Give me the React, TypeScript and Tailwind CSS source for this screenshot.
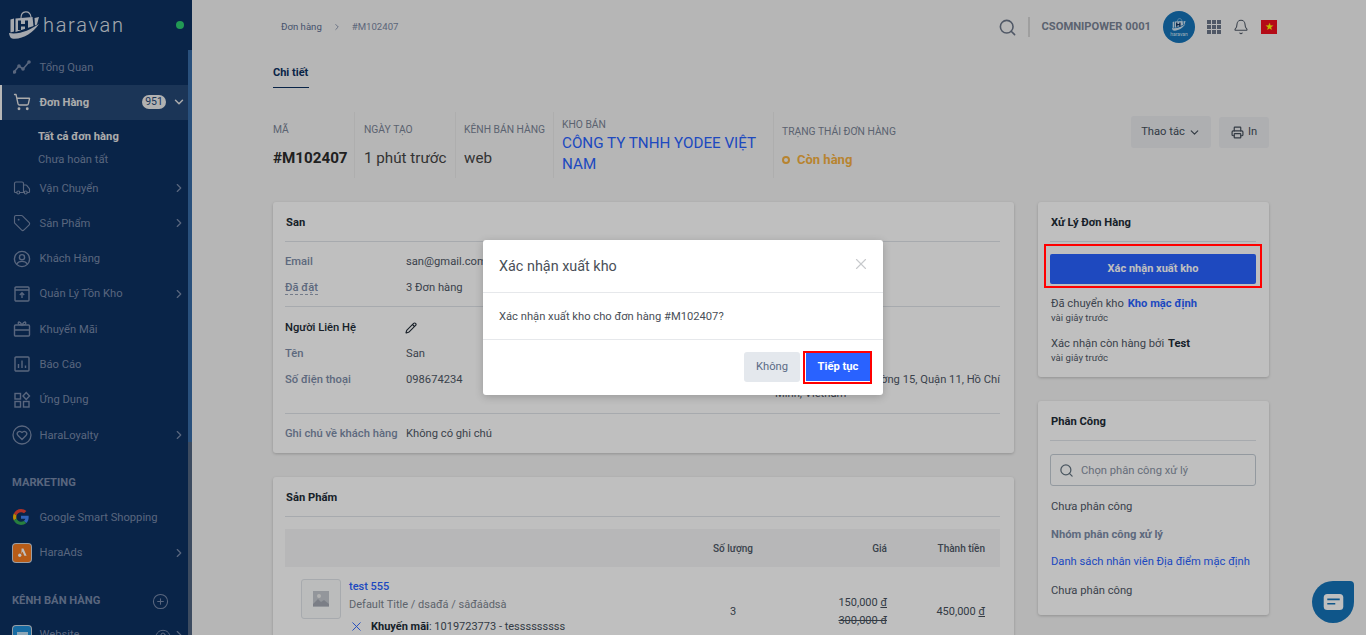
import React from 'react';
import {
  Bell,
  ChevronDown,
  ChevronRight,
  CirclePlus,
  Eye,
  Pencil,
  Printer,
  Search,
  ShoppingCart,
  Tag,
  Truck,
  X,
} from 'lucide-react';

const iconCls = 'w-[18px] h-[18px]';

const LineIcon = () => (
  <svg viewBox="0 0 18 18" className={iconCls} fill="none" stroke="currentColor" strokeWidth="1.6">
    <path d="M1 14l5-6 4 3 6-7" />
    <circle cx="1.5" cy="14" r="1" fill="currentColor" />
    <circle cx="6" cy="8" r="1" fill="currentColor" />
    <circle cx="10" cy="11" r="1" fill="currentColor" />
    <circle cx="16" cy="4" r="1" fill="currentColor" />
  </svg>
);

const UserIcon = () => (
  <svg viewBox="0 0 18 18" className={iconCls} fill="none" stroke="currentColor" strokeWidth="1.4">
    <circle cx="9" cy="9" r="7.6" />
    <circle cx="9" cy="7.2" r="2.6" />
    <path d="M3.8 14c1-2 3-2.6 5.2-2.6s4.200.6 5.200 2.600" />
  </svg>
);

const StockIcon = () => (
  <svg viewBox="0 0 18 18" className={iconCls} fill="none" stroke="currentColor" strokeWidth="1.4">
    <rect x="2" y="2" width="14" height="14" rx="1" />
    <path d="M2 5h14M9 13V8M6.800 10L9 7.800 11.200 10" />
  </svg>
);

const GiftIcon = () => (
  <svg viewBox="0 0 18 18" className={iconCls} fill="none" stroke="currentColor" strokeWidth="1.4">
    <rect x="1.500" y="5" width="15" height="11" rx="1" />
    <path d="M1.500 10h15M9 5C7 1 4.500 1.500 5.500 4 6 5 7.500 5 9 5c1.500 0 3 0 3.500-1 1-2.500-1.500-3-3.500 1z" />
  </svg>
);

const ReportIcon = () => (
  <svg viewBox="0 0 18 18" className={iconCls} fill="none" stroke="currentColor" strokeWidth="1.4">
    <rect x="2" y="2" width="14" height="14" rx="1" />
    <path d="M5.500 13V9M9 13V5.500M12.500 13v-2.500" />
  </svg>
);

const AppsIcon = () => (
  <svg viewBox="0 0 18 18" className={iconCls} fill="none" stroke="currentColor" strokeWidth="1.4">
    <rect x="2" y="2.500" width="5.500" height="5.500" />
    <rect x="2" y="10.500" width="5.500" height="5.500" />
    <rect x="10.500" y="10.500" width="5.500" height="5.500" />
    <path d="M13.200 1.500l3.300 3.500-3.300 3.500L10 5z" />
  </svg>
);

const LoyaltyIcon = () => (
  <svg viewBox="0 0 20 20" className="w-5 h-5 -ml-[1px]" fill="none" stroke="currentColor" strokeWidth="1.3">
    <circle cx="10" cy="10" r="9" />
    <path d="M10 14.500L5.800 10.200C4 8 6.800 4.800 10 7.500c3.200-2.700 6 .5 4.200 2.700z" />
  </svg>
);

const GoogleIcon = () => (
  <svg viewBox="0 0 48 48" className="w-[16px] h-[16px]">
    <path fill="#ea4335" d="M24 9.500c3.500 0 6.700 1.200 9.200 3.600l6.900-6.900C35.900 2.400 30.400 0 24 0 14.600 0 6.500 5.400 2.600 13.300l8 6.200C12.400 13.600 17.700 9.500 24 9.500z" />
    <path fill="#4285f4" d="M47 24.500c0-1.600-.1-3.100-.4-4.500H24v9h13c-.6 3-2.300 5.500-4.800 7.200l7.700 6C44.400 37.900 47 31.800 47 24.500z" />
    <path fill="#fbbc05" d="M10.500 28.500c-.5-1.400-.7-2.900-.7-4.500s.3-3.100.7-4.500l-8-6.200C.9 16.500 0 20.100 0 24s.9 7.500 2.600 10.700z" />
    <path fill="#34a853" d="M24 48c6.500 0 11.900-2.100 15.900-5.800l-7.700-6c-2.200 1.400-4.900 2.300-8.200 2.300-6.300 0-11.600-4.200-13.500-9.900l-8 6.200C6.500 42.600 14.600 48 24 48z" />
  </svg>
);

const AdsIcon = () => (
  <span className="flex h-[18px] w-[18px] items-center justify-center rounded-[3px] bg-[#f47b20] ring-1 ring-[#ccd3dd]">
    <svg viewBox="0 0 12 12" className="h-[11px] w-[11px]" fill="#fff">
      <path d="M5 1.500h2l3.500 8H8L6 5 4.800 7.500z" />
      <circle cx="3" cy="9" r="1.800" />
    </svg>
  </span>
);

const SiteIcon = () => (
  <span className="flex h-[18px] w-[18px] items-center justify-center rounded-[3px] bg-[#1f8fd8] ring-1 ring-[#ccd3dd]">
    <span className="h-[6px] w-[11px] bg-white/70" />
  </span>
);

const HaravanMark = ({ className }: { className: string }) => (
  <svg viewBox="0 0 31 28" className={className}>
    <path d="M12 7c0-8 9-8 10-1" fill="none" stroke="currentColor" strokeWidth="1.100" />
    <path d="M1.500 8.500l3.500-1v13l-3.500 1zM6.500 7.500l17-1.500 1 9-18 6z" fill="currentColor" />
    <path d="M25.500 7l4.500-1-2 7.500-2 1z" fill="currentColor" />
    <path d="M9 9.500h3v3.500h4V9.500h3V19h-3v-3.500h-4V19H9z" fill="#0d3061" />
    <path d="M0 22c10 2 21-3 30-9-6 9-17 16-27 14.500C1 27 .3 24 0 22z" fill="currentColor" />
  </svg>
);

type NavItem = {
  label: string;
  icon: React.ReactNode;
  arrow?: boolean;
};

const midItems: NavItem[] = [
  { label: 'Vận Chuyển', icon: <Truck className={iconCls} strokeWidth={1.5} />, arrow: true },
  { label: 'Sản Phẩm', icon: <Tag className={iconCls} strokeWidth={1.5} />, arrow: true },
  { label: 'Khách Hàng', icon: <UserIcon /> },
  { label: 'Quản Lý Tồn Kho', icon: <StockIcon />, arrow: true },
  { label: 'Khuyến Mãi', icon: <GiftIcon /> },
  { label: 'Báo Cáo', icon: <ReportIcon /> },
  { label: 'Ứng Dụng', icon: <AppsIcon /> },
  { label: 'HaraLoyalty', icon: <LoyaltyIcon />, arrow: true },
];

const NavRow = ({ item }: { item: NavItem }) => (
  <div className="flex h-[35.3px] items-center pl-[13px] pr-[6.5px] text-[#7789a8]">
    <span className="flex w-[26.5px] shrink-0 justify-start">{item.icon}</span>
    <span className="flex-1 pt-[2px] text-[11.2px]">{item.label}</span>
    {item.arrow && <ChevronRight className="h-[14px] w-[14px]" />}
  </div>
);

const Sidebar = () => (
  <aside className="relative h-full w-[192px] shrink-0 overflow-hidden bg-[#0d3061]">
    <div className="flex h-[49.5px] items-center pl-[9px] pr-[8px] text-[#dde1e8]">
      <HaravanMark className="h-[28px] w-[31px]" />
      <span className="ml-[3px] flex-1 text-[20px] font-light leading-none tracking-[1.7px]">haravan</span>
      <span className="h-[8px] w-[8px] rounded-full bg-[#2ecc71]" />
    </div>
    <NavRow item={{ label: 'Tổng Quan', icon: <LineIcon /> }} />
    <div className="flex h-[35px] items-center border-l-2 border-[#f5f5f5] bg-[#254775] pl-[11px] pr-[6.5px] text-[#e6e6e6]">
      <ShoppingCart className="w-[18px] h-[18px] shrink-0" strokeWidth={1.8} />
      <span className="ml-[8.500px] flex-1 pt-[2px] text-[11.2px] font-bold">Đơn Hàng</span>
      <span className="mr-[5.500px] flex h-[14px] w-[24px] items-center justify-center rounded-full bg-[#ededed] text-[10.500px] text-[#254775]">951</span>
      <ChevronDown className="h-[14px] w-[14px]" strokeWidth={2.500} />
    </div>
    <div className="h-[50.500px] pl-[38px] pt-[6px] text-[11.2px]">
      <div className="flex h-[23px] items-center font-bold text-[#e6e6e6]">Tất cả đơn hàng</div>
      <div className="flex h-[23px] items-center text-[#7789a8]">Chưa hoàn tất</div>
    </div>
    {midItems.map((item) => (
      <NavRow key={item.label} item={item} />
    ))}
    <div className="pl-[12px] pt-[21px] pb-[8px] text-[11.2px] font-bold leading-[18px] text-[#7789a8]">MARKETING</div>
    <NavRow item={{ label: 'Google Smart Shopping', icon: <GoogleIcon /> }} />
    <NavRow item={{ label: 'HaraAds', icon: <AdsIcon />, arrow: true }} />
    <div className="flex items-center pl-[12px] pr-[23px] pt-[22px] pb-[7px] text-[#7789a8]">
      <span className="flex-1 text-[11.2px] font-bold leading-[18px]">KÊNH BÁN HÀNG</span>
      <CirclePlus className="h-[17px] w-[17px]" strokeWidth={1.5} />
    </div>
    <div className="flex h-[35.3px] items-center pl-[13px] pr-[6.5px] text-[#7789a8]">
      <span className="flex w-[26.5px] shrink-0"><SiteIcon /></span>
      <span className="flex-1 text-[11.2px] leading-[14px]">Website</span>
      <Eye className="mr-[1px] h-[16px] w-[16px]" strokeWidth={1.5} />
      <ChevronRight className="h-[14px] w-[14px]" />
    </div>
    {/* thanh cuộn */}
    <div className="absolute right-0 top-[50px] h-[585px] w-[4px] bg-[#506480]">
      <div className="h-[392px] w-full bg-[#376ba6]" />
    </div>
  </aside>
);

const Header = () => (
  <div className="flex h-[54px] items-center">
    <div className="flex items-center pl-[8px] text-[9.600px] text-[#7b88a3]">
      <span className="text-[#5d6f92]">Đơn hàng</span>
      <ChevronRight className="mx-[10px] h-[10px] w-[10px]" />
      <span>#M102407</span>
    </div>
    <div className="ml-auto mr-[-8px] flex items-center">
      <Search className="h-[19px] w-[19px] text-[#6b7689]" strokeWidth={2} />
      <span className="ml-[11px] h-[20px] w-[2px] bg-[#d4d4d4]" />
      <span className="ml-[11px] text-[11.2px] font-bold text-[#7a8496]">CSOMNIPOWER 0001</span>
      <span className="ml-[12px] flex h-[32px] w-[32px] flex-col items-center justify-center rounded-full bg-[#1473b8] text-[#d0e4f3]">
        <HaravanMark className="h-[13px] w-[14px]" />
        <span className="text-[5px] leading-[6px]">haravan</span>
      </span>
      <span className="ml-[12px] grid grid-cols-3 gap-[1px]">
        {Array.from({ length: 9 }).map((_, i) => (
          <span key={i} className="h-[4px] w-[4px] bg-[#6b7689]" />
        ))}
      </span>
      <Bell className="ml-[12px] h-[16px] w-[16px] text-[#4f5866]" strokeWidth={1.6} />
      <span className="ml-[12px] flex h-[14px] w-[16px] items-center justify-center bg-[#f00f1f] text-[10px] leading-none text-[#ffff00]">★</span>
    </div>
  </div>
);

const Summary = () => (
  <div className="mt-[24px] flex h-[66px] items-stretch">
    <div className="w-[82px] border-r border-[#e8e8e8]">
      <div className="mt-[11px] text-[10.300px] leading-[14px] text-[#7a8496]">MÃ</div>
      <div className="mt-[11px] text-[15.200px] font-bold leading-[20px] text-[#2b2b2b]">#M102407</div>
    </div>
    <div className="w-[101px] border-r border-[#e8e8e8] pl-[9px]">
      <div className="mt-[11px] text-[10.300px] leading-[14px] text-[#7a8496]">NGÀY TẠO</div>
      <div className="mt-[11px] text-[15.200px] leading-[20px] text-[#454545]">1 phút trước</div>
    </div>
    <div className="w-[98px] border-r border-[#e8e8e8] pl-[8px]">
      <div className="mt-[11px] text-[10.300px] leading-[14px] text-[#7a8496]">KÊNH BÁN HÀNG</div>
      <div className="mt-[11px] text-[15.200px] leading-[20px] text-[#454545]">web</div>
    </div>
    <div className="w-[220px] border-r border-[#e8e8e8] pl-[8px]">
      <div className="mt-[6px] text-[10.300px] leading-[14px] text-[#7a8496]">KHO BÁN</div>
      <div className="mt-[1px] text-[15.200px] leading-[21px] text-[#2962ff]">CÔNG TY TNHH YODEE VIỆT NAM</div>
    </div>
    <div className="pl-[8px]">
      <div className="mt-[13px] text-[10.300px] leading-[14px] text-[#7a8496]">TRẠNG THÁI ĐƠN HÀNG</div>
      <div className="mt-[11px] flex items-center text-[13px] font-bold leading-[20px] text-[#f5b041]">
        <span className="mr-[7px] h-[8px] w-[8px] rounded-full border-2 border-[#f5b041]" />
        Còn hàng
      </div>
    </div>
    <div className="ml-auto flex items-start gap-[8px] pt-[4px]">
      <button className="flex h-[32px] w-[80px] items-center justify-center gap-[3px] rounded-[3px] bg-[#e8eaed] pt-[1px] text-[11.2px] text-[#454f5b]">
        Thao tác
        <ChevronDown className="h-[13px] w-[13px]" strokeWidth={2.200} />
      </button>
      <button className="mt-[1px] flex h-[31px] w-[50px] items-center justify-center gap-[4px] rounded-[3px] bg-[#e8eaed] text-[11.2px] text-[#454f5b]">
        <Printer className="h-[13px] w-[13px]" strokeWidth={2.200} />
        In
      </button>
    </div>
  </div>
);

const Card = ({ title, children, className }: { title: string; children: React.ReactNode; className: string }) => (
  <section className={`rounded-[3px] bg-white pl-[12px] shadow-[0_1px_3px_rgba(0,0,0,0.2)] ${className}`}>
    <div className="flex h-[40px] items-center border-b border-[#dfe3e8] pt-[3px] text-[11.2px] font-bold text-[#212b36]">
      <span className="ml-[1px]">{title}</span>
    </div>
    {children}
  </section>
);

const InfoRow = ({ label, value }: { label: React.ReactNode; value: React.ReactNode }) => (
  <div className="flex h-[26px] items-center pt-[2px] text-[11.2px]">
    <span className="w-[121px] shrink-0 font-medium text-[#7d8ca8]">{label}</span>
    <span className="text-[#4f5866]">{value}</span>
  </div>
);

const CustomerCard = () => (
  <Card title="San" className="h-[251px] pr-[14px]">
    <div className="h-[65px] border-b border-[#dfe3e8] pt-[6px]">
      <InfoRow label="Email" value="san@gmail.com" />
      <InfoRow
        label={<span className="border-b border-dashed border-[#9aa5b8]">Đã đặt</span>}
        value="3 Đơn hàng"
      />
    </div>
    <div className="relative h-[107px] border-b border-[#dfe3e8] pt-[7px]">
      <div className="flex h-[26px] items-center pt-[2px] text-[11.2px] font-medium text-[#212b36]">
        <span className="w-[120px]">Người Liên Hệ</span>
        <Pencil className="h-[12px] w-[12px]" strokeWidth={2.200} />
      </div>
      <InfoRow label="Tên" value="San" />
      <InfoRow label="Số điện thoại" value="098674234" />
      <div className="absolute left-[490px] top-[66px] w-[225px] text-[11.2px] leading-[14px] text-[#4f5866]">
        <div className="flex justify-end whitespace-nowrap">Số 21 Đường 3, Phường 15, Quận 11, Hồ Chí</div>
        <div>Minh, Vietnam</div>
      </div>
    </div>
    <div className="flex h-[38px] items-center pt-[2px] text-[11.2px]">
      <span className="w-[121px] shrink-0 whitespace-nowrap font-medium text-[#7d8ca8]">Ghi chú về khách hàng</span>
      <span className="text-[#4f5866]">Không có ghi chú</span>
    </div>
  </Card>
);

const ProductCard = () => (
  <Card title="Sản Phẩm" className="mt-[24px] h-[220px] pr-[14px]">
    <div className="mt-[12px] flex h-[38px] items-center justify-end bg-[#f4f5f6] pr-[15px] text-[10px] font-medium text-[#4f5866]">
      <span className="w-[60px] text-center">Số lượng</span>
      <span className="w-[124px] text-right">Giá</span>
      <span className="w-[98px] text-right">Thành tiền</span>
    </div>
    <div className="flex pl-[16px] pr-[15px] pt-[12px] text-[11px]">
      <div className="flex h-[40px] w-[40px] shrink-0 items-center justify-center rounded-[3px] border border-[#dfe3e8] bg-[#fafbfb]">
        <svg viewBox="0 0 16 16" className="h-[16px] w-[16px]" fill="#c4c8cf">
          <path d="M0 0h16v16H0z" />
          <path d="M0 13l5-5 3 3 3-2 5 4v2H0z" fill="#a4a9b3" />
          <circle cx="6" cy="5" r="2" fill="#eee" />
        </svg>
      </div>
      <div className="ml-[8px] min-w-0 flex-1 pt-[1px]">
        <div className="font-medium leading-[14px] text-[#2962ff]">test 555</div>
        <div className="mt-[4px] leading-[14px] text-[#7d8590]">Default Title / dsađá / sâđáàdsà</div>
        <div className="mt-[7px] flex items-center leading-[14px] text-[#454f5b]">
          <X className="h-[15px] w-[15px] text-[#2962ff]" strokeWidth={1.5} />
          <span className="ml-[7px] font-bold text-[#212b36]">Khuyến mãi</span>: 1019723773 - tesssssssss
        </div>
      </div>
      <div className="w-[60px] pt-[26px] text-center leading-[14px] text-[#454f5b]">3</div>
      <div className="w-[124px] pt-[15px] text-right leading-[18px] text-[#454f5b]">
        <div>150,000 <span className="underline">đ</span></div>
        <div className="line-through">300,000 đ</div>
      </div>
      <div className="w-[98px] pt-[26px] text-right leading-[14px] text-[#454f5b]">450,000 <span className="underline">đ</span></div>
    </div>
  </Card>
);

const ActionCard = () => (
  <Card title="Xử Lý Đơn Hàng" className="h-[175px] pr-[13px]">
    <button className="mt-[12px] flex h-[30px] w-full items-center justify-center rounded-[2px] bg-[#2962ff] pt-[1px] text-[11px] font-bold text-white">
      Xác nhận xuất kho
    </button>
    <div className="ml-[1px] mt-[13px] text-[11.2px] leading-[14px] text-[#4f5866]">
      Đã chuyển kho <span className="ml-[1px] font-bold text-[#2962ff]">Kho mặc định</span>
    </div>
    <div className="ml-[1px] text-[9.600px] leading-[13px] text-[#4f5866]">vài giây trước</div>
    <div className="ml-[1px] mt-[13px] text-[11.2px] leading-[14px] text-[#4f5866]">
      Xác nhận còn hàng bởi <span className="ml-[1px] font-bold text-[#212b36]">Test</span>
    </div>
    <div className="ml-[1px] text-[9.600px] leading-[13px] text-[#4f5866]">vài giây trước</div>
  </Card>
);

const AssignCard = () => (
  <Card title="Phân Công" className="mt-[24px] h-[214px] pr-[13px]">
    <div className="mt-[13px] flex h-[32px] items-center rounded-[3px] border border-[#c4cdd5] pl-[8px] text-[11.2px] text-[#8993a4]">
      <Search className="h-[15px] w-[15px] text-[#637381]" strokeWidth={2} />
      <span className="ml-[7px] pt-[2px]">Chọn phân công xử lý</span>
    </div>
    <div className="ml-[1px] mt-[12px] text-[11.2px] leading-[18px] text-[#4f5866]">Chưa phân công</div>
    <div className="ml-[1px] mt-[10px] text-[11.2px] font-bold leading-[18px] text-[#7d8ca8]">Nhóm phân công xử lý</div>
    <div className="ml-[1px] mt-[9px] whitespace-nowrap text-[11.2px] leading-[18px] text-[#2962ff]">Danh sách nhân viên Địa điểm mặc định</div>
    <div className="ml-[1px] mt-[11px] text-[11.2px] leading-[18px] text-[#4f5866]">Chưa phân công</div>
  </Card>
);

const ConfirmModal = () => (
  <div className="absolute left-[483px] top-[240px] h-[155px] w-[400px] rounded-[3px] bg-white shadow-[0_2px_8px_rgba(0,0,0,0.2)]">
    <div className="flex h-[53px] items-center justify-between border-b border-[#e6e8eb] pl-[16px] pr-[13px]">
      <span className="pt-[2px] text-[14.400px] text-[#4a4f57]">Xác nhận xuất kho</span>
      <X className="mb-[4px] h-[18px] w-[18px] text-[#c7c9cc]" strokeWidth={1.500} />
    </div>
    <div className="flex h-[47px] items-center border-b border-[#e6e8eb] pl-[16px] pt-[3px] text-[11.2px] text-[#4a4f57]">
      Xác nhận xuất kho cho đơn hàng #M102407?
    </div>
    <div className="flex justify-end gap-[6px] pr-[13px] pt-[12px]">
      <button className="h-[30px] w-[56px] rounded-[3px] bg-[#e4e8ed] pt-[1px] text-[11.2px] text-[#5a6b85]">Không</button>
      <button className="h-[29px] w-[64px] bg-[#2962ff] pt-[1px] text-[11.2px] font-bold text-white">Tiếp tục</button>
    </div>
  </div>
);

const ChatBubble = () => (
  <div className="absolute left-[1312px] top-[581px] flex h-[42px] w-[42px] items-center justify-center rounded-[21px] rounded-tr-[4px] bg-[#1473b8]">
    <svg viewBox="0 0 22 18" className="h-[16px] w-[21px]">
      <rect width="22" height="18" rx="4" fill="#fff" />
      <path d="M4 6h14M4 11h9" stroke="#1473b8" strokeWidth="1.800" />
    </svg>
  </div>
);

export default function App() {
  return (
    <div className="relative flex h-[635px] w-full overflow-hidden bg-[#f3f3f3] font-['Roboto',sans-serif]">
      <Sidebar />
      <main className="min-w-0 flex-1 pl-[81px] pr-[97px]">
        <Header />
        <div className="h-[34px] w-[36px] border-b border-[#0d3061] pt-[11px] text-[11px] font-bold leading-[16px] text-[#0d3061]">
          Chi tiết
        </div>
        <Summary />
        <div className="mt-[24px] flex items-start gap-[24px]">
          <div className="w-[741px] shrink-0">
            <CustomerCard />
            <ProductCard />
          </div>
          <div className="w-[231px] shrink-0">
            <ActionCard />
            <AssignCard />
          </div>
        </div>
      </main>
      <ChatBubble />
      {/* lớp phủ và hộp thoại */}
      <div className="absolute inset-0 bg-black/25" />
      <ConfirmModal />
      <div className="absolute left-[1044px] top-[244px] h-[44px] w-[218px] border-2 border-[#ff0000]" />
      <div className="absolute left-[803px] top-[351px] h-[33px] w-[69px] border-2 border-[#ff0000]" />
    </div>
  );
}
